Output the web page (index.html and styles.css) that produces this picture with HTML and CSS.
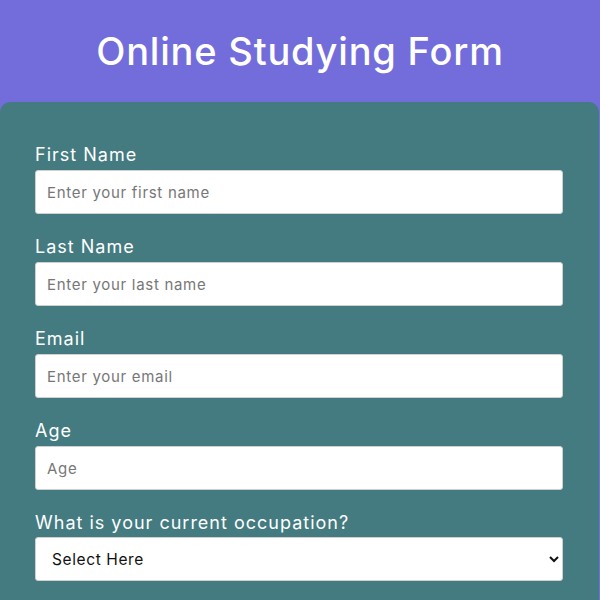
FILE: index.html
```html
<!DOCTYPE html>
<html lang="en">
<head>
<meta charset="utf-8">
<title>Online Studying Form</title>
<link rel="stylesheet" href="styles.css">
</head>
<body>
<header class="header">
  <h1 class="title">Online Studying Form</h1>
</header>
<main class="card">
  <form class="form">
    <div class="field">
      <label class="label" for="fn">First Name</label>
      <input class="input" id="fn" type="text" placeholder="Enter your first name">
    </div>
    <div class="field">
      <label class="label" for="ln">Last Name</label>
      <input class="input" id="ln" type="text" placeholder="Enter your last name">
    </div>
    <div class="field">
      <label class="label" for="em">Email</label>
      <input class="input" id="em" type="email" placeholder="Enter your email">
    </div>
    <div class="field">
      <label class="label" for="age">Age</label>
      <input class="input" id="age" type="text" placeholder="Age">
    </div>
    <div class="field">
      <label class="label" for="occ">What is your current occupation?</label>
      <select class="input select" id="occ">
        <option>Select Here</option>
        <option>Student</option>
        <option>Employee</option>
      </select>
    </div>
  </form>
</main>
</body>
</html>
```
FILE: styles.css
```css
* { box-sizing: border-box; }
body {
  margin: 0;
  background: #736ddb;
  font-family: Inter, "Open Sans", sans-serif;
}
.header {
  height: 102px;
  display: flex;
  align-items: center;
  justify-content: center;
}
.title {
  margin: 0;
  color: #fff;
  font-size: 38px;
  font-weight: 500;
  letter-spacing: 0.8px;
}
.card {
  width: 599px;
  background: #437b80;
  border-radius: 10px 10px 0 0;
  padding: 41px 36px 30px 35px;
}
.field {
  display: flex;
  flex-direction: column;
  gap: 3px;
  margin-bottom: 21px;
}
.field:last-child .label { margin-bottom: -1px; }
.label {
  color: #fff;
  font-size: 18px;
  line-height: 24px;
  letter-spacing: 1px;
}
.input {
  width: 528px;
  height: 44px;
  border: 1px solid #d0d0d0;
  border-radius: 3px;
  background: #fff;
  padding: 0 11px;
  font-family: Inter, "Open Sans", sans-serif;
  font-size: 15px;
  letter-spacing: 0.7px;
  color: #111;
}
.input::placeholder { color: #777; }
.select {
  padding-left: 12px;
  font-size: 15.5px;
  letter-spacing: 0.6px;
  color: #111;
}
```
